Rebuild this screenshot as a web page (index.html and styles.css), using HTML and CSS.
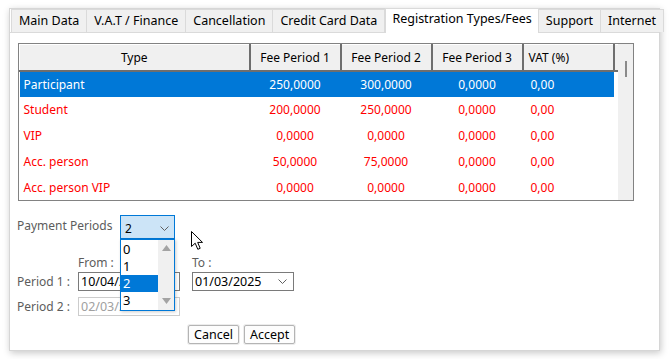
FILE: index.html
```html
<!DOCTYPE html>
<html lang="en">
<head>
<meta charset="UTF-8" />
<meta name="viewport" content="width=device-width, initial-scale=1" />
<title>Registration Types/Fees</title>
<link rel="stylesheet" href="styles.css">
</head>
<body>

<div class="window">
  <div class="tabs">
    <div class="tab">Main Data</div>
    <div class="tab">V.A.T / Finance</div>
    <div class="tab">Cancellation</div>
    <div class="tab">Credit Card Data</div>
    <div class="tab active">Registration Types/Fees</div>
    <div class="tab">Support</div>
    <div class="tab">Internet</div>
  </div>

  <div class="page">
    <div class="grid">
      <table class="fees">
        <colgroup>
          <col class="c-type"><col class="c-num"><col class="c-num"><col class="c-num"><col class="c-vat"><col class="c-fill">
        </colgroup>
        <thead>
          <tr>
            <th>Type</th>
            <th>Fee Period 1</th>
            <th>Fee Period 2</th>
            <th>Fee Period 3</th>
            <th class="left">VAT (%)</th>
            <th class="fill"></th>
          </tr>
        </thead>
        <tbody>
          <tr class="selected">
            <td class="name">Participant</td><td>250,0000</td><td>300,0000</td><td>0,0000</td><td class="vat">0,00</td><td></td>
          </tr>
          <tr>
            <td class="name">Student</td><td>200,0000</td><td>250,0000</td><td>0,0000</td><td class="vat">0,00</td><td></td>
          </tr>
          <tr>
            <td class="name">VIP</td><td>0,0000</td><td>0,0000</td><td>0,0000</td><td class="vat">0,00</td><td></td>
          </tr>
          <tr>
            <td class="name">Acc. person</td><td>50,0000</td><td>75,0000</td><td>0,0000</td><td class="vat">0,00</td><td></td>
          </tr>
          <tr>
            <td class="name">Acc. person VIP</td><td>0,0000</td><td>0,0000</td><td>0,0000</td><td class="vat">0,00</td><td></td>
          </tr>
        </tbody>
      </table>
      <div class="vscroll"><div class="thumb"></div></div>
    </div>

    <div class="periods-row">
      <span class="label">Payment Periods</span>
      <div class="combo open">
        <span>2</span>
        <svg class="chev" width="9" height="5" viewBox="0 0 9 5"><path d="M0.5 0.5 L4.5 4.5 L8.5 0.5" fill="none" stroke="#606060" stroke-width="1"/></svg>
      </div>
    </div>

    <div class="heads">
      <span class="label">From :</span>
      <span class="label">To :</span>
    </div>

    <div class="period-grid">
      <span class="label">Period 1 :</span>
      <div class="date">
        <span>10/04/2024</span>
        <svg class="chev" width="9" height="5" viewBox="0 0 9 5"><path d="M0.5 0.5 L4.5 4.5 L8.5 0.5" fill="none" stroke="#606060" stroke-width="1"/></svg>
      </div>
      <div class="date to">
        <span>01/03/2025</span>
        <svg class="chev" width="9" height="5" viewBox="0 0 9 5"><path d="M0.5 0.5 L4.5 4.5 L8.5 0.5" fill="none" stroke="#606060" stroke-width="1"/></svg>
      </div>

      <span class="label">Period 2 :</span>
      <div class="date disabled"><span>02/03/2025</span></div>
    </div>

    <div class="buttons">
      <button class="btn">Cancel</button>
      <button class="btn">Accept</button>
    </div>

    <!-- open list of the Payment Periods combo -->
    <div class="droplist">
      <div class="items">
        <div class="item">0</div>
        <div class="item">1</div>
        <div class="item sel">2</div>
        <div class="item">3</div>
      </div>
      <div class="list-scroll">
        <svg width="9" height="6" viewBox="0 0 9 6"><path d="M0 6 L4.5 0 L9 6 Z" fill="#a3a3a3"/></svg>
        <svg width="9" height="6" viewBox="0 0 9 6"><path d="M0 0 L4.5 6 L9 0 Z" fill="#a3a3a3"/></svg>
      </div>
    </div>

    <svg class="cursor" width="14" height="20" viewBox="0 0 14 20">
      <path d="M0.5 0.5 L0.5 15.5 L4.2 12.2 L6.8 18.3 L9.2 17.3 L6.7 11.4 L11.5 11.4 Z" fill="#fff" stroke="#000" stroke-width="1" stroke-linejoin="miter"/>
    </svg>
  </div>
</div>

</body>
</html>
```

FILE: styles.css
```css
* {
  box-sizing: border-box;
}

body {
  margin: 0;
  background: #fff;
  padding: 8px 9px;
  font-family: 'Noto Sans', 'Open Sans', sans-serif;
  font-size: 12px;
  color: #000;
}

.window {
  width: 651px;
  height: 343px;
  background: #fff;
  border: 1px solid #d6d6d6;
  box-shadow: 1px 2px 7px rgba(0, 0, 0, 0.22);
}

/* tab strip */
.tabs {
  display: flex;
  align-items: flex-end;
  height: 24px;
  padding-left: 1px;
  border-bottom: 1px solid #dadada;
}

.tab {
  height: 23px;
  line-height: 21px;
  padding: 0 7px;
  background: #f0f0f0;
  border: 1px solid #dadada;
  border-left: none;
  border-bottom: none;
  font-size: 12.5px;
  white-space: nowrap;
}

.tab:first-child {
  border-left: 1px solid #dadada;
}

.tab.active {
  height: 25px;
  line-height: 20px;
  margin-bottom: -1px;
  background: #fff;
  border-left: 1px solid #dadada;
  padding: 0 6px;
}

/* page */
.page {
  position: relative;
  padding: 10px 0 0 8px;
}

.grid {
  display: flex;
  width: 616px;
  height: 158px;
  border: 1px solid #828282;
}

.fees {
  border-collapse: collapse;
  table-layout: fixed;
  width: 598px;
}

.c-type { width: 230px; }
.c-num { width: 91px; }
.c-vat { width: 91px; }
.c-fill { width: 4px; }

.fees th {
  height: 26px;
  padding: 0;
  background: #f0f0f0;
  font-weight: normal;
  text-align: center;
  border-left: 1px solid #fff;
  border-top: 1px solid #fff;
  border-right: 2px solid #6e6e6e;
  border-bottom: 2px solid #6e6e6e;
}

.fees th.left {
  text-align: left;
  padding-left: 5px;
}

.fees th.fill {
  border-right: none;
}

.fees td {
  height: 26px;
  padding: 0;
  text-align: center;
  color: #ff0000;
  white-space: nowrap;
}

.fees td.name {
  text-align: left;
  padding-left: 4px;
}

.fees td.vat {
  text-align: left;
  padding-left: 8px;
}

.fees tr.selected td {
  background: #0078d7;
  color: #fff;
}

.fees tr.selected td:last-child {
  background: #fff;
}

.vscroll {
  flex: 1;
  background: #f0f0f0;
}

.thumb {
  width: 2px;
  height: 16px;
  margin: 17px 0 0 7px;
  background: #8a8a8a;
}

/* payment periods */
.label {
  color: #5c5c5c;
}

.periods-row {
  display: flex;
  align-items: flex-start;
  margin-top: 14px;
}

.periods-row .label {
  width: 103px;
  margin-left: -1px;
  padding-top: 2px;
}

.combo {
  display: flex;
  align-items: center;
  justify-content: space-between;
  width: 55px;
  height: 24px;
  padding: 2px 5px 0 4px;
  border: 1px solid #0078d7;
  background: #cce4f7;
}

.heads {
  display: flex;
  height: 18px;
  margin-top: 14px;
  padding-left: 60px;
  align-items: flex-end;
}

.heads .label:first-child {
  width: 114px;
}

.period-grid {
  display: grid;
  grid-template-columns: 61px 102px 114px;
  grid-auto-rows: 19px;
  row-gap: 6px;
  margin-top: 1px;
  margin-left: -1px;
}

.period-grid .label {
  line-height: 19px;
}

.date {
  display: flex;
  align-items: center;
  justify-content: space-between;
  padding: 0 6px 0 2px;
  border: 1px solid #7a7a7a;
  font-size: 12.5px;
  background: #fff;
}

.date.to {
  margin-left: 12px;
}

.date.disabled {
  border-color: #cccccc;
  color: #a0a0a0;
}

.buttons {
  display: flex;
  gap: 5px;
  margin: 9px 0 0 170px;
}

.btn {
  height: 19px;
  padding: 0 5px;
  font-family: inherit;
  font-size: 12.5px;
  line-height: 16px;
  background: #fdfdfd;
  border: 1px solid #b4b4b4;
  border-radius: 2px;
  box-shadow: 0 0 0 1px #ececec;
  color: #000;
}

/* overlays */
.droplist {
  position: absolute;
  left: 110px;
  top: 206px;
  width: 55px;
  height: 72px;
  display: flex;
  border: 1px solid #0078d7;
  background: #fff;
  box-shadow: 1px 1px 3px rgba(0, 0, 0, 0.2);
}

.items {
  width: 37px;
  padding-top: 1px;
}

.item {
  height: 17px;
  line-height: 17px;
  padding-left: 2px;
  font-size: 13px;
}

.item.sel {
  background: #0078d7;
  color: #fff;
}

.list-scroll {
  flex: 1;
  display: flex;
  flex-direction: column;
  justify-content: space-between;
  align-items: center;
  padding: 5px 0 6px;
  background: #f0f0f0;
}

.cursor {
  position: absolute;
  left: 181px;
  top: 198px;
}
```
